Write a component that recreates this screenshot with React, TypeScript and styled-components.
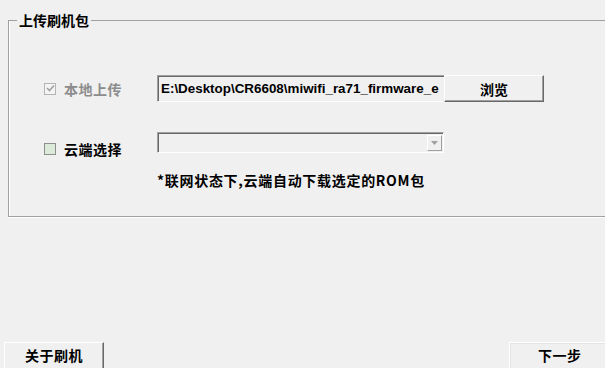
import styled, { createGlobalStyle } from "styled-components";

const Global = createGlobalStyle`
  html, body {
    margin: 0;
    padding: 0;
    background: #f0f0f0;
    overflow: hidden;
  }
  body {
    font-family: "Noto Sans CJK SC", "Liberation Sans", sans-serif;
    color: #000;
  }
`;

const Page = styled.div`
  height: 100vh;
  display: flex;
  flex-direction: column;
`;

const Group = styled.fieldset`
  margin: 12px -10px 0 8px;
  padding: 0;
  height: 205px;
  box-sizing: border-box;
  border: 1px solid #a0a0a0;
  box-shadow: 0 1px 0 #fff, inset 1px 0 0 #fff;
  min-width: 0;
`;

const Legend = styled.legend`
  margin-left: 8px;
  padding: 0 2px;
  font-size: 14px;
  font-weight: 700;
  line-height: 16px;
`;

const Body = styled.div`
  display: grid;
  grid-template-columns: 113px 287px 100px;
  grid-template-rows: 27px 21px auto;
  row-gap: 30px;
  padding: 47px 0 0 35px;
`;

const Option = styled.label<{ $disabled?: boolean; $shift?: number }>`
  display: flex;
  align-items: center;
  gap: 8px;
  font-size: 14px;
  font-weight: 700;
  line-height: 16px;
  letter-spacing: 0.5px;
  color: ${(p) => (p.$disabled ? "#8c8c8c" : "#000")};
  transform: translateY(${(p) => p.$shift ?? 0}px);
`;

const Box = styled.span<{ $disabled?: boolean }>`
  width: 12px;
  height: 12px;
  box-sizing: border-box;
  border: 1px solid ${(p) => (p.$disabled ? "#b4b4b4" : "#8e8f8f")};
  background: ${(p) => (p.$disabled ? "#f4f4f4" : "#dcebd9")};
  display: flex;
  align-items: center;
  justify-content: center;
`;

const Field = styled.div`
  box-sizing: border-box;
  height: 27px;
  border-top: 1px solid #a0a0a0;
  border-left: 1px solid #a0a0a0;
  border-bottom: 1px solid #fff;
  border-right: none;
  box-shadow: inset 1px 1px 0 #696969;
  background: #f0f0f0;
  padding: 0 0 0 3px;
  display: flex;
  align-items: center;
  overflow: hidden;
  white-space: nowrap;
  font-family: "Liberation Sans", Arial, sans-serif;
  font-weight: 700;
  font-size: 13.4px;
`;

const Browse = styled.button`
  box-sizing: border-box;
  height: 27px;
  margin: 0;
  padding: 0;
  background: #f0f0f0;
  border-top: 1px solid #fff;
  border-left: 1px solid #fff;
  border-right: 1px solid #696969;
  border-bottom: 1px solid #696969;
  box-shadow: inset -1px -1px 0 #a0a0a0;
  font-family: "Noto Sans CJK SC", sans-serif;
  font-size: 14px;
  font-weight: 700;
  color: #000;
`;

const Combo = styled.div`
  box-sizing: border-box;
  height: 21px;
  border-top: 1px solid #a0a0a0;
  border-left: 1px solid #a0a0a0;
  border-bottom: 1px solid #fff;
  border-right: 1px solid #fff;
  box-shadow: inset 1px 1px 0 #696969;
  background: #f0f0f0;
  display: flex;
  justify-content: flex-end;
  align-items: stretch;
  padding: 2px 1px 1px 0;
`;

const Drop = styled.span`
  width: 15px;
  box-sizing: border-box;
  border-top: 1px solid #fff;
  border-left: 1px solid #fff;
  border-right: 1px solid #a0a0a0;
  border-bottom: 1px solid #a0a0a0;
  display: flex;
  align-items: center;
  justify-content: center;
`;

const Note = styled.div`
  grid-column: 2 / 4;
  font-size: 14px;
  font-weight: 700;
  line-height: 16px;
  letter-spacing: 0.7px;
  margin-top: -11px;
`;

const Footer = styled.div`
  margin-top: auto;
  display: flex;
  justify-content: space-between;
  padding: 0 0 0 4px;
`;

const FootButton = styled.button<{ $edge?: "left" | "right" }>`
  box-sizing: border-box;
  width: ${(p) => (p.$edge === "right" ? "96px" : "100px")};
  height: 26px;
  margin: 0;
  padding: 0 0 2px;
  background: #f0f0f0;
  border: none;
  border-top: 1px solid #fff;
  border-left: 1px solid #fff;
  border-right: ${(p) => (p.$edge === "right" ? "none" : "1px solid #696969")};
  box-shadow: ${(p) =>
    p.$edge === "right" ? "inset 1px 1px 0 #e3e3e3" : "inset -1px 0 0 #a0a0a0"};
  font-family: "Noto Sans CJK SC", sans-serif;
  font-size: 14px;
  font-weight: 700;
  letter-spacing: 0.5px;
  color: #000;
  text-align: ${(p) => (p.$edge === "right" ? "left" : "center")};
  padding-left: ${(p) => (p.$edge === "right" ? "28px" : "0")};
`;

function Check({ disabled }: { disabled?: boolean }) {
  return (
    <Box $disabled={disabled}>
      {disabled && (
        <svg width="9" height="9" viewBox="0 0 9 9">
          <path d="M1 4 L3.5 6.5 L8 1.5" fill="none" stroke="#a0a0a0" strokeWidth="1.6" />
        </svg>
      )}
    </Box>
  );
}

export default function App() {
  return (
    <Page>
      <Global />
      <Group>
        <Legend>上传刷机包</Legend>
        <Body>
          <Option $disabled>
            <Check disabled />
            本地上传
          </Option>
          <Field>E:\Desktop\CR6608\miwifi_ra71_firmware_e</Field>
          <Browse type="button">浏览</Browse>

          <Option $shift={6}>
            <Check />
            云端选择
          </Option>
          <Combo>
            <Drop>
              <svg width="7" height="4" viewBox="0 0 7 4">
                <path d="M0 0 H7 L3.5 4 Z" fill="#a0a0a0" />
              </svg>
            </Drop>
          </Combo>
          <span />

          <span />
          <Note>*联网状态下,云端自动下载选定的ROM包</Note>
        </Body>
      </Group>
      <Footer>
        <FootButton type="button">关于刷机</FootButton>
        <FootButton type="button" $edge="right">下一步</FootButton>
      </Footer>
    </Page>
  );
}
